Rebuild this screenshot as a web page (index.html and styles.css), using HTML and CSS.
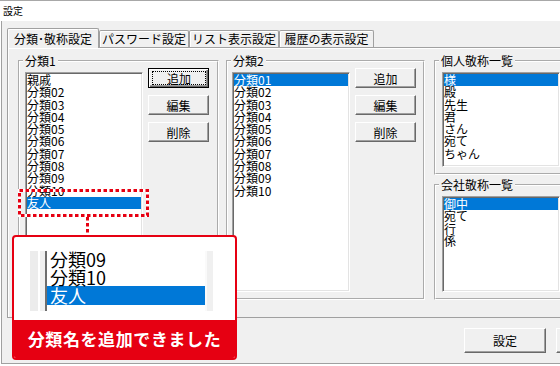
FILE: index.html
```html
<!DOCTYPE html>
<html lang="ja">
<head>
    <meta charset="utf-8">
    <title>設定</title>
    <link rel="stylesheet" href="styles.css">
</head>
<body>
<div class="window">
    <div class="titlebar">設定</div>
    <div class="dialog">
        <div class="tabs">
            <div class="tab active tab-1">分類･敬称設定</div>
            <div class="tab tab-2">パスワード設定</div>
            <div class="tab tab-3">リスト表示設定</div>
            <div class="tab tab-4">履歴の表示設定</div>
        </div>
        <div class="panel">
            <fieldset class="group group-cat1">
                <legend>分類1</legend>
                <div class="group-body">
                    <ul class="listbox list-tall">
                        <li>親戚</li>
                        <li>分類02</li>
                        <li>分類03</li>
                        <li>分類04</li>
                        <li>分類05</li>
                        <li>分類06</li>
                        <li>分類07</li>
                        <li>分類08</li>
                        <li>分類09</li>
                        <li>分類10</li>
                        <li class="selected">友人</li>
                    </ul>
                    <div class="buttons">
                        <button class="btn focused"><span class="focus-ring">追加</span></button>
                        <button class="btn">編集</button>
                        <button class="btn">削除</button>
                    </div>
                </div>
            </fieldset>
            <fieldset class="group group-cat2">
                <legend>分類2</legend>
                <div class="group-body">
                    <ul class="listbox list-tall">
                        <li class="selected">分類01</li>
                        <li>分類02</li>
                        <li>分類03</li>
                        <li>分類04</li>
                        <li>分類05</li>
                        <li>分類06</li>
                        <li>分類07</li>
                        <li>分類08</li>
                        <li>分類09</li>
                        <li>分類10</li>
                    </ul>
                    <div class="buttons">
                        <button class="btn">追加</button>
                        <button class="btn">編集</button>
                        <button class="btn">削除</button>
                    </div>
                </div>
            </fieldset>
            <div class="col-right">
                <fieldset class="group group-side">
                    <legend>個人敬称一覧</legend>
                    <div class="group-body">
                        <ul class="listbox list-person">
                            <li class="selected">様</li>
                            <li>殿</li>
                            <li>先生</li>
                            <li>君</li>
                            <li>さん</li>
                            <li>宛て</li>
                            <li>ちゃん</li>
                        </ul>
                    </div>
                </fieldset>
                <fieldset class="group group-side group-company">
                    <legend>会社敬称一覧</legend>
                    <div class="group-body">
                        <ul class="listbox list-company">
                            <li class="selected">御中</li>
                            <li>宛て</li>
                            <li>行</li>
                            <li>係</li>
                        </ul>
                    </div>
                </fieldset>
            </div>
        </div>
        <div class="footer">
            <button class="btn btn-wide">設定</button>
            <button class="btn btn-wide"></button>
        </div>
    </div>

    <svg class="marker" width="560" height="366">
        <rect x="19.5" y="190.5" width="128" height="25" fill="none" stroke="#fff" stroke-width="3"/>
        <rect x="19.5" y="190.5" width="128" height="25" fill="none" stroke="#e60012" stroke-width="3" stroke-dasharray="3.5 2.5"/>
        <line x1="87.5" y1="217" x2="87.5" y2="235" stroke="#e60012" stroke-width="3" stroke-dasharray="3.5 2.5"/>
    </svg>

    <div class="callout">
        <div class="callout-view">
            <div class="zv-left"></div>
            <ul class="zv-list">
                <li>分類09</li>
                <li>分類10</li>
                <li class="selected">友人</li>
            </ul>
            <div class="zv-right"></div>
        </div>
        <div class="callout-msg">分類名を追加できました</div>
    </div>
</div>
</body>
</html>
```

FILE: styles.css
```css
html, body {
    margin: 0;
    overflow: hidden;
}
body {
    background: #fff;
    font-family: "Noto Sans CJK JP", "Noto Sans", sans-serif;
    font-size: 12px;
    color: #000;
}
.window {
    position: relative;
    width: 650px;
    height: 366px;
}
.titlebar {
    height: 20px;
    border-top: 1px solid #a8a8a8;
    padding-left: 3px;
    font-size: 10px;
    line-height: 20px;
}
.dialog {
    box-sizing: border-box;
    height: 343px;
    margin-left: 1px;
    padding: 7px 12px 0 5px;
    background: #f0f0f0;
    border-left: 1px solid #a0a0a0;
    border-bottom: 1px solid #a0a0a0;
}

/* tabs */
.tabs {
    display: flex;
    align-items: flex-end;
    height: 19px;
}
.tab {
    box-sizing: border-box;
    height: 17px;
    border: 1px solid #a0a0a0;
    border-bottom: none;
    border-radius: 2px 2px 0 0;
    box-shadow: inset 1px 1px #fff;
    line-height: 16px;
    text-align: center;
    white-space: nowrap;
}
.tab.active {
    position: relative;
    z-index: 1;
    height: 20px;
    margin-bottom: -1px;
    background: #f0f0f0;
    line-height: 19px;
}
.tab-1 { width: 92px; }
.tab-2 { width: 90px; }
.tab-3 { width: 90px; }
.tab-4 { width: 95px; }

.panel {
    box-sizing: border-box;
    display: flex;
    align-items: flex-start;
    height: 271px;
    padding: 6px 0 0 10px;
    border: 1px solid #a0a0a0;
    box-shadow: inset 1px 1px #fff;
}

/* group boxes */
.group {
    margin: 0;
    padding: 0;
    min-width: 0;
    border: 2px groove #fff;
}
.group legend {
    margin-left: 3px;
    padding: 0 2px;
    line-height: 14px;
}
.group-body {
    display: flex;
    align-items: flex-start;
    gap: 5px;
    padding: 0 8px 6px 5px;
}
.group-cat2 {
    margin-left: 7px;
}
.group-cat2 .group-body {
    padding: 0 7px 6px 4px;
}
.col-right {
    margin-left: 9px;
}
.group-side .group-body {
    padding: 0 6px 6px 6px;
}
.group-company {
    margin-top: 3px;
}

/* list boxes */
.listbox {
    box-sizing: border-box;
    width: 118px;
    margin: 4px 0 0;
    padding: 0;
    list-style: none;
    background: #fff;
    border: 1px solid;
    border-color: #a0a0a0 #fff #fff #a0a0a0;
    box-shadow: inset 1px 1px #696969, inset -1px -1px #e3e3e3;
    overflow: hidden;
}
.listbox li {
    margin: 0 1px;
    height: 12.3px;
    line-height: 12.3px;
    white-space: nowrap;
}
.listbox li:first-child {
    margin-top: 1px;
}
.list-tall { height: 220px; }
.list-person { height: 95px; }
.list-company { height: 96px; }
.selected {
    background: #0078d7;
    color: #fff;
}

/* buttons */
.buttons {
    display: flex;
    flex-direction: column;
    gap: 7px;
}
.btn {
    box-sizing: border-box;
    display: flex;
    align-items: center;
    justify-content: center;
    width: 61px;
    height: 20px;
    padding: 0;
    font-family: inherit;
    font-size: 12px;
    color: #000;
    background: #f0f0f0;
    border: 1px solid;
    border-color: #fff #696969 #696969 #fff;
    box-shadow: inset -1px -1px #a0a0a0;
}
.btn.focused {
    border-color: #000;
    box-shadow: inset 1px 1px #fff, inset -1px -1px #696969, inset -2px -2px #a0a0a0;
}
.focus-ring {
    flex: 1;
    align-self: stretch;
    display: flex;
    align-items: center;
    justify-content: center;
    margin: 2px 2px 2px 3px;
    border: 1px dotted #000;
}
.footer {
    display: flex;
    justify-content: flex-end;
    gap: 10px;
    margin-top: 10px;
}
.btn-wide {
    width: 82px;
    height: 25px;
}

/* annotation */
.marker {
    position: absolute;
    left: 0;
    top: 0;
}
.callout {
    position: absolute;
    left: 12px;
    top: 235px;
    box-sizing: border-box;
    display: flex;
    flex-direction: column;
    width: 225px;
    height: 125px;
    background: #fff;
    border: 2px solid #e60012;
    border-radius: 4px;
    overflow: hidden;
}
.callout-view {
    display: flex;
    width: 183px;
    height: 60px;
    margin: 14px 0 0 16px;
}
.zv-left {
    width: 15px;
    background: linear-gradient(to right, #ececec 8px, #fff 8px, #fff 10px, #f0f0f0 10px);
    border-right: 2px solid #6e6e6e;
}
.zv-list {
    flex: 1;
    margin: 0;
    padding: 0;
    list-style: none;
    background: #fff;
    font-size: 18px;
    overflow: hidden;
}
.zv-list li {
    height: 18.2px;
    line-height: 18.2px;
    padding-left: 3px;
    white-space: nowrap;
}
.zv-list li:first-child {
    margin-top: -1px;
}
.zv-right {
    width: 6px;
    background: #f0f0f0;
    border-left: 2px solid #fafafa;
}
.callout-msg {
    margin-top: auto;
    height: 38px;
    line-height: 38px;
    background: #e60012;
    color: #fff;
    font-size: 17px;
    font-weight: bold;
    letter-spacing: 0.6px;
    text-align: center;
}
```
